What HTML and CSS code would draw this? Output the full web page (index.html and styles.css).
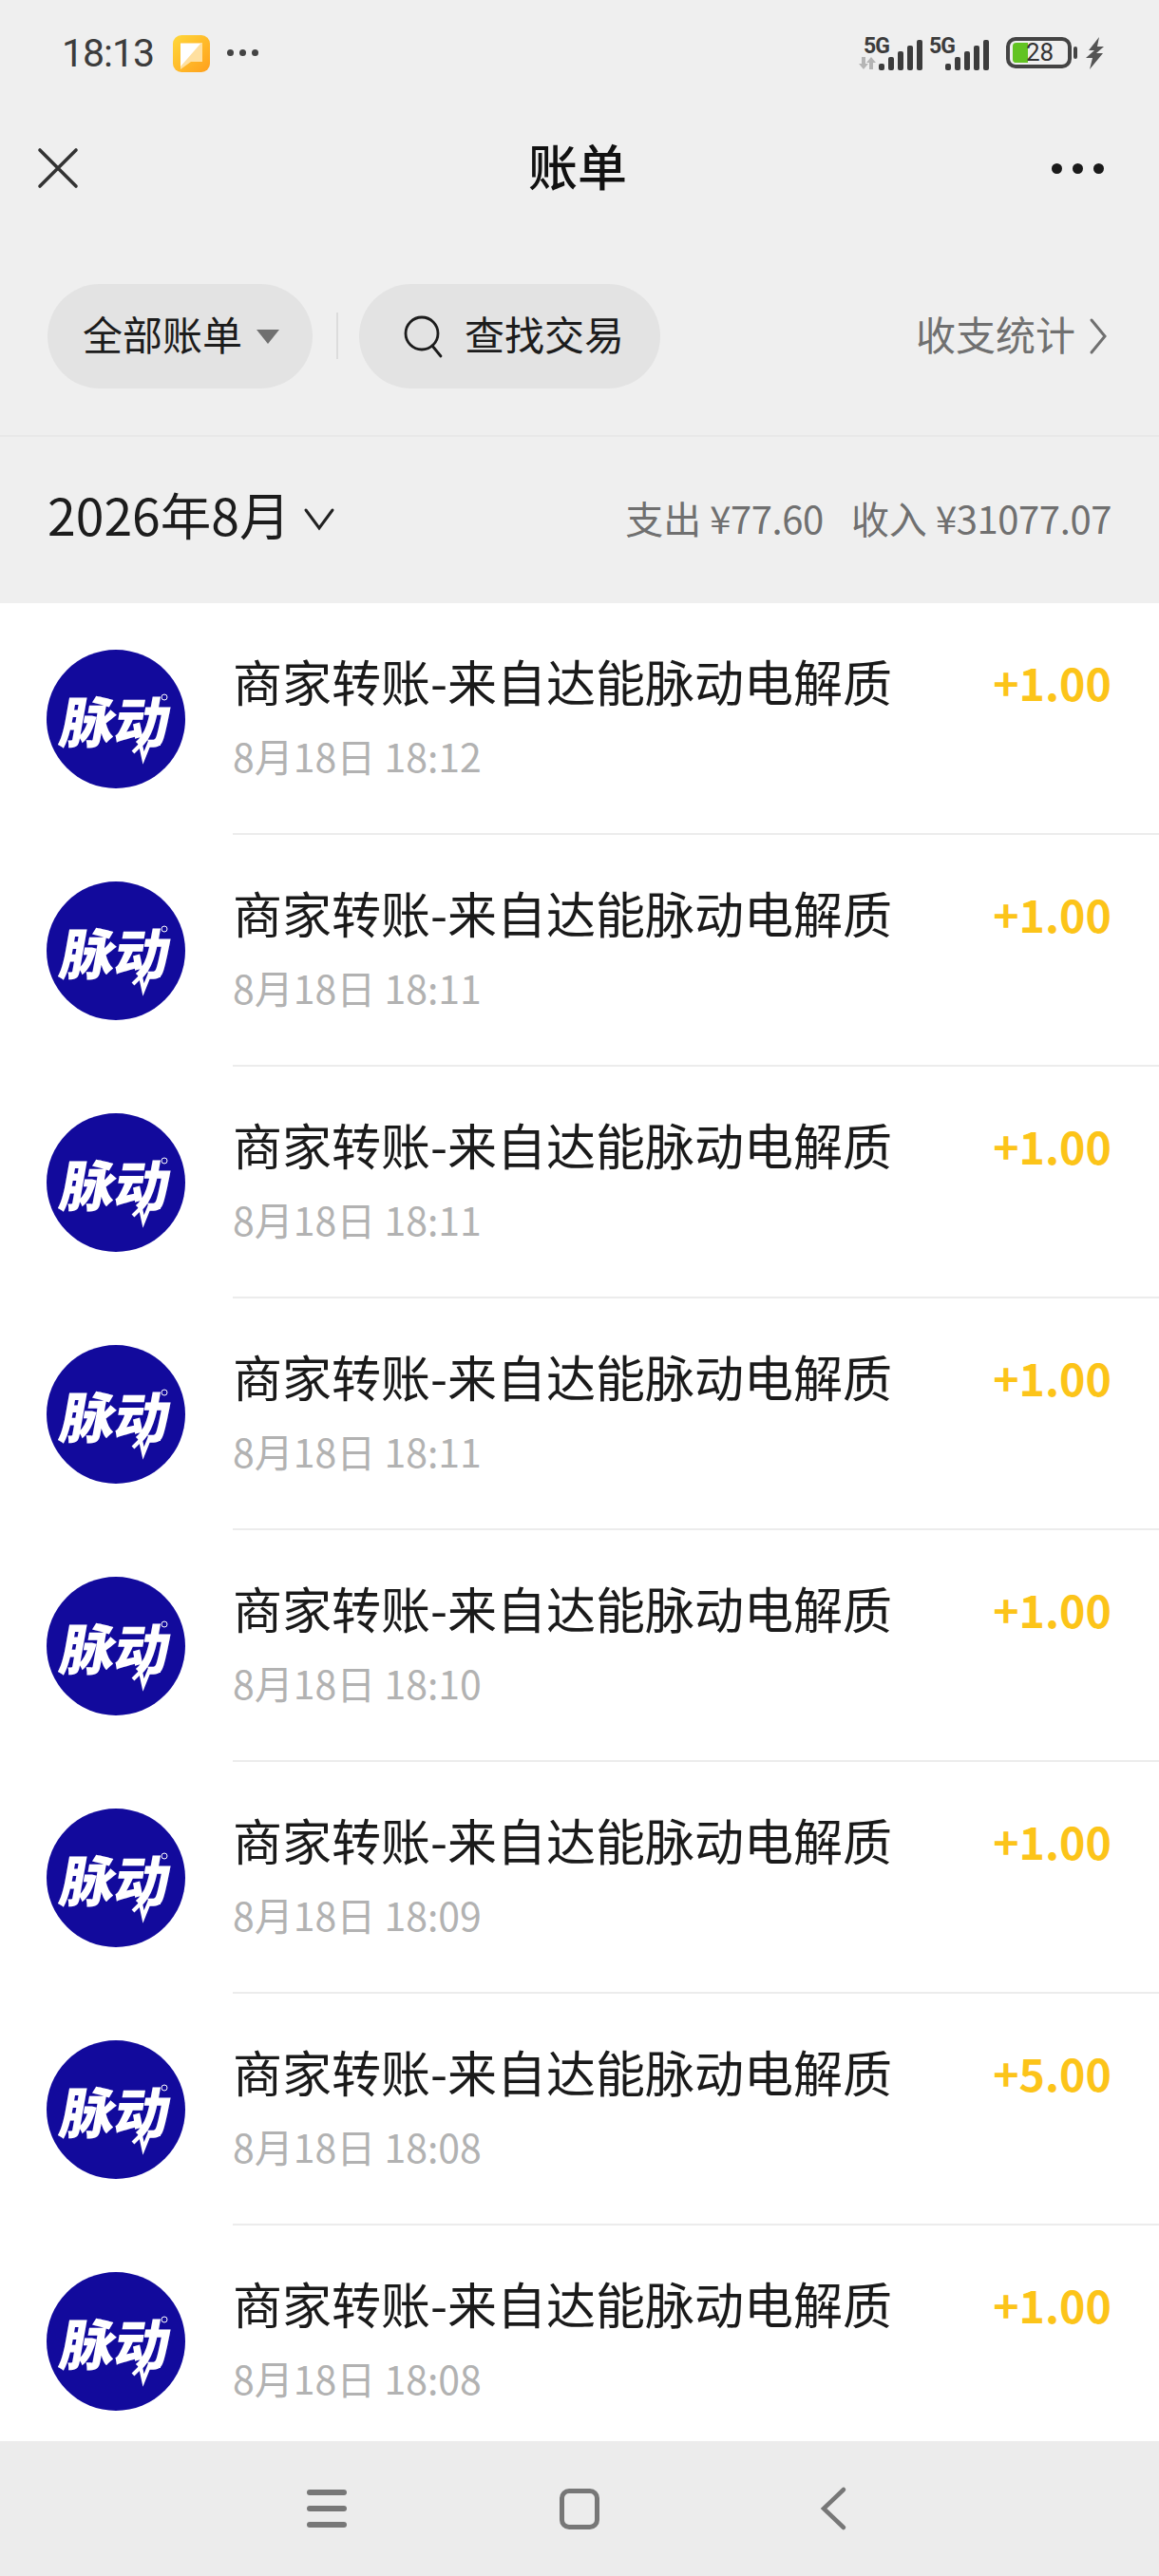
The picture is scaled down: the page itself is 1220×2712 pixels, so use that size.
FILE: index.html
```html
<!DOCTYPE html>
<html lang="zh-CN">
<head>
    <meta charset="UTF-8">
    <title>账单</title>
    <link rel="stylesheet" href="styles.css">
</head>
<body>
<div class="phone">
    <div class="status">
        <span class="time">18:13</span>
        <svg class="app-icon" viewBox="0 0 39 39">
            <defs>
                <linearGradient id="appGrad" x1="0" y1="0" x2="1" y2="1">
                    <stop offset="0" stop-color="#ffd83a"/>
                    <stop offset="1" stop-color="#ff9f1c"/>
                </linearGradient>
            </defs>
            <rect width="39" height="39" rx="9" fill="url(#appGrad)"/>
            <path d="M8 8h23v20H19L8 36z" fill="#ffe0a0"/>
            <path d="M8 9h21L8 33z" fill="#fff"/>
        </svg>
        <span class="status-dots"><i></i><i></i><i></i></span>
        <span class="grow"></span>
        <svg class="signal" viewBox="0 0 72 36">
            <text x="5" y="16" class="sig-text">5G</text>
            <path d="M7 20v7h3l-5 6-5-6h3v-7zM11 33v-7H8l5-6 5 6h-3v7z" fill="#b5b5b5"/>
            <rect x="21" y="27" width="6" height="7" rx="2"/>
            <rect x="31" y="20" width="6" height="14" rx="2"/>
            <rect x="41" y="14" width="6" height="20" rx="2"/>
            <rect x="51" y="8" width="6" height="26" rx="2"/>
            <rect x="61" y="2" width="6" height="32" rx="2"/>
        </svg>
        <svg class="signal signal-b" viewBox="0 0 66 36">
            <text x="0" y="16" class="sig-text">5G</text>
            <rect x="17" y="27" width="6" height="7" rx="2"/>
            <rect x="27" y="20" width="6" height="14" rx="2"/>
            <rect x="37" y="14" width="6" height="20" rx="2"/>
            <rect x="47" y="8" width="6" height="26" rx="2"/>
            <rect x="57" y="2" width="6" height="32" rx="2"/>
        </svg>
        <span class="battery"><span class="battery-fill"></span><span class="battery-num">28</span></span>
        <span class="battery-nub"></span>
        <svg class="bolt" viewBox="0 0 19 34"><path d="M14 0L3 14h6L0 22h7l-3 12L18 17h-7l8-7h-7z" fill="#555"/></svg>
    </div>

    <div class="header">
        <svg class="close" viewBox="0 0 42 42"><path d="M2 2l38 38M40 2L2 40" stroke="#333" stroke-width="3.6" stroke-linecap="round"/></svg>
        <div class="title">账单</div>
        <span class="more"><i></i><i></i><i></i></span>
    </div>

    <div class="filters">
        <div class="pill pill-all"><span class="label">全部账单</span><span class="tri"></span></div>
        <span class="divider"></span>
        <div class="pill pill-search">
            <svg class="search" viewBox="0 0 42 44"><circle cx="19" cy="19" r="17" fill="none" stroke="#1c1c1c" stroke-width="2.8"/><path d="M30 32l9 11" stroke="#1c1c1c" stroke-width="2.8" stroke-linecap="round"/></svg>
            <span class="label">查找交易</span>
        </div>
        <span class="grow"></span>
        <div class="stats"><span class="label">收支统计</span>
            <svg class="stats-arrow" viewBox="0 0 18 38"><path d="M2 2l14 17L2 36" fill="none" stroke="#707070" stroke-width="3" stroke-linecap="round"/></svg>
        </div>
    </div>

    <div class="month-bar">
        <div class="month">2026年8月</div>
        <svg class="month-arrow" viewBox="0 0 32 25"><path d="M2 3l14 19L30 3" fill="none" stroke="#222" stroke-width="3" stroke-linecap="round"/></svg>
        <span class="grow"></span>
        <div class="sum"><span>支出</span><span class="sum-val">¥77.60</span><span class="sum-gap">收入</span><span class="sum-val">¥31077.07</span></div>
    </div>

    <div class="list">
        <div class="row">
            <div class="logo"><span>脉动</span><svg class="logo-mark" viewBox="0 0 146 146"><path d="M91 108l8-8 3 14 6-15h12" fill="none" stroke="#fff" stroke-width="4"/><circle cx="124" cy="50" r="3" fill="none" stroke="#fff" stroke-width="1"/></svg></div>
            <div class="info">
                <div class="texts"><div class="name">商家转账-来自达能脉动电解质</div><div class="date">8月18日 18:12</div></div>
                <div class="amount">+1.00</div>
            </div>
        </div>
        <div class="row">
            <div class="logo"><span>脉动</span><svg class="logo-mark" viewBox="0 0 146 146"><path d="M91 108l8-8 3 14 6-15h12" fill="none" stroke="#fff" stroke-width="4"/><circle cx="124" cy="50" r="3" fill="none" stroke="#fff" stroke-width="1"/></svg></div>
            <div class="info">
                <div class="texts"><div class="name">商家转账-来自达能脉动电解质</div><div class="date">8月18日 18:11</div></div>
                <div class="amount">+1.00</div>
            </div>
        </div>
        <div class="row">
            <div class="logo"><span>脉动</span><svg class="logo-mark" viewBox="0 0 146 146"><path d="M91 108l8-8 3 14 6-15h12" fill="none" stroke="#fff" stroke-width="4"/><circle cx="124" cy="50" r="3" fill="none" stroke="#fff" stroke-width="1"/></svg></div>
            <div class="info">
                <div class="texts"><div class="name">商家转账-来自达能脉动电解质</div><div class="date">8月18日 18:11</div></div>
                <div class="amount">+1.00</div>
            </div>
        </div>
        <div class="row">
            <div class="logo"><span>脉动</span><svg class="logo-mark" viewBox="0 0 146 146"><path d="M91 108l8-8 3 14 6-15h12" fill="none" stroke="#fff" stroke-width="4"/><circle cx="124" cy="50" r="3" fill="none" stroke="#fff" stroke-width="1"/></svg></div>
            <div class="info">
                <div class="texts"><div class="name">商家转账-来自达能脉动电解质</div><div class="date">8月18日 18:11</div></div>
                <div class="amount">+1.00</div>
            </div>
        </div>
        <div class="row">
            <div class="logo"><span>脉动</span><svg class="logo-mark" viewBox="0 0 146 146"><path d="M91 108l8-8 3 14 6-15h12" fill="none" stroke="#fff" stroke-width="4"/><circle cx="124" cy="50" r="3" fill="none" stroke="#fff" stroke-width="1"/></svg></div>
            <div class="info">
                <div class="texts"><div class="name">商家转账-来自达能脉动电解质</div><div class="date">8月18日 18:10</div></div>
                <div class="amount">+1.00</div>
            </div>
        </div>
        <div class="row">
            <div class="logo"><span>脉动</span><svg class="logo-mark" viewBox="0 0 146 146"><path d="M91 108l8-8 3 14 6-15h12" fill="none" stroke="#fff" stroke-width="4"/><circle cx="124" cy="50" r="3" fill="none" stroke="#fff" stroke-width="1"/></svg></div>
            <div class="info">
                <div class="texts"><div class="name">商家转账-来自达能脉动电解质</div><div class="date">8月18日 18:09</div></div>
                <div class="amount">+1.00</div>
            </div>
        </div>
        <div class="row">
            <div class="logo"><span>脉动</span><svg class="logo-mark" viewBox="0 0 146 146"><path d="M91 108l8-8 3 14 6-15h12" fill="none" stroke="#fff" stroke-width="4"/><circle cx="124" cy="50" r="3" fill="none" stroke="#fff" stroke-width="1"/></svg></div>
            <div class="info">
                <div class="texts"><div class="name">商家转账-来自达能脉动电解质</div><div class="date">8月18日 18:08</div></div>
                <div class="amount">+5.00</div>
            </div>
        </div>
        <div class="row">
            <div class="logo"><span>脉动</span><svg class="logo-mark" viewBox="0 0 146 146"><path d="M91 108l8-8 3 14 6-15h12" fill="none" stroke="#fff" stroke-width="4"/><circle cx="124" cy="50" r="3" fill="none" stroke="#fff" stroke-width="1"/></svg></div>
            <div class="info">
                <div class="texts"><div class="name">商家转账-来自达能脉动电解质</div><div class="date">8月18日 18:08</div></div>
                <div class="amount">+1.00</div>
            </div>
        </div>
    </div>

    <div class="nav">
        <span class="nav-menu"><i></i><i></i><i></i></span>
        <span class="nav-home"></span>
        <svg class="nav-back" viewBox="0 0 26 44"><path d="M24 2L3 22l21 20" fill="none" stroke="#777" stroke-width="4.5" stroke-linecap="round"/></svg>
    </div>
</div>
</body>
</html>
```

FILE: styles.css
```css
*{
    box-sizing: border-box;
}
body{
    margin: 0;
    font-family: "Noto Sans CJK SC", "Noto Sans", sans-serif;
    background: #efefef;
}
i{
    display: block;
}
svg{
    display: block;
    flex: none;
    overflow: visible;
}
.phone{
    width: 1220px;
    height: 2712px;
    display: flex;
    flex-direction: column;
    overflow: hidden;
}
.grow{
    flex: 1;
}

/* status bar */
.status{
    height: 110px;
    padding: 37px 58px 0 65px;
    display: flex;
    align-items: flex-start;
}
.time{
    font-family: Roboto, sans-serif;
    font-size: 41px;
    line-height: 38px;
    color: #3c3c3c;
    width: 117px;
    letter-spacing: -1px;
}
.app-icon{
    width: 39px;
    height: 39px;
}
.status-dots{
    display: flex;
    gap: 6px;
    margin: 15px 0 0 18px;
}
.status-dots i{
    width: 7px;
    height: 7px;
    border-radius: 50%;
    background: #444;
}
.signal{
    width: 72px;
    height: 36px;
    fill: #3c3c3c;
    margin-top: 3px;
}
.signal-b{
    width: 66px;
    margin-left: 2px;
}
.sig-text{
    font-family: Roboto, sans-serif;
    font-size: 23px;
    font-weight: 700;
    letter-spacing: -1px;
}
.battery{
    display: block;
    position: relative;
    width: 69px;
    height: 33px;
    margin: 2px 0 0 15px;
    border: 4px solid #444;
    border-radius: 10px;
}
.battery-fill{
    display: block;
    width: 16px;
    height: 100%;
    margin-left: 3px;
    background: #62c322;
    border-radius: 4px 0 0 4px;
    transform: scaleY(0.84);
}
.battery-num{
    position: absolute;
    left: 17px;
    top: 0;
    font-family: Roboto, sans-serif;
    font-size: 26px;
    line-height: 25px;
    color: #333;
}
.battery-nub{
    width: 4px;
    height: 13px;
    margin: 12px 0 0 2px;
    background: #444;
    border-radius: 2px;
}
.bolt{
    width: 19px;
    height: 34px;
    margin: 2px 0 0 9px;
}

/* title bar */
.header{
    height: 134px;
    display: grid;
    grid-template-columns: 1fr auto 1fr;
    align-items: center;
    padding: 0 58px 0 40px;
}
.close{
    width: 42px;
    height: 42px;
}
.title{
    font-size: 52px;
    font-weight: 500;
    line-height: 60px;
    color: #111;
    margin-bottom: 6px;
    margin-left: 14px;
}
.more{
    display: flex;
    gap: 11px;
    justify-content: flex-end;
}
.more i{
    width: 11px;
    height: 11px;
    border-radius: 50%;
    background: #1a1a1a;
}

/* filter row */
.filters{
    height: 216px;
    padding: 55px 55px 0 50px;
    display: flex;
    align-items: flex-start;
    border-bottom: 2px solid #e8e8e8;
}
.label{
    margin-bottom: 7px;
}
.pill{
    height: 110px;
    border-radius: 55px;
    background: #e3e3e3;
    display: flex;
    align-items: center;
    font-size: 42px;
    color: #1c1c1c;
}
.pill-all{
    width: 279px;
    padding-left: 37px;
}
.tri{
    width: 0;
    height: 0;
    margin-left: 15px;
    border-left: 12px solid transparent;
    border-right: 12px solid transparent;
    border-top: 15px solid #707070;
}
.divider{
    width: 2px;
    height: 49px;
    margin: 30px 22px 0 25px;
    background: #dcdcdc;
}
.pill-search{
    width: 317px;
    padding-left: 47px;
}
.search{
    width: 42px;
    height: 44px;
    margin-right: 22px;
}
.stats{
    height: 110px;
    display: flex;
    align-items: center;
    font-size: 42px;
    color: #707070;
}
.stats-arrow{
    width: 18px;
    height: 38px;
    margin-left: 15px;
}

/* month row */
.month-bar{
    height: 175px;
    padding: 0 50px 0 50px;
    display: flex;
    align-items: center;
}
.month{
    font-size: 53.5px;
    color: #1c1c1c;
    line-height: 60px;
    margin-bottom: 13px;
}
.month-arrow{
    width: 32px;
    height: 25px;
    margin-left: 15px;
    margin-bottom: 3px;
}
.sum{
    display: flex;
    align-items: center;
    font-size: 40px;
    color: #707070;
    margin-bottom: 6px;
}
.sum-val{
    margin-left: 9px;
    letter-spacing: -0.4px;
}
.sum-gap{
    margin-left: 29px;
}

/* list */
.list{
    flex: 1;
    min-height: 0;
    overflow: hidden;
    background: #fff;
}
.row{
    height: 244px;
    padding-left: 49px;
    display: flex;
    align-items: center;
}
.logo{
    position: relative;
    width: 146px;
    height: 146px;
    flex: none;
    border-radius: 50%;
    background: #120a9c;
    display: flex;
    align-items: center;
    justify-content: center;
}
.logo span{
    font-size: 58px;
    font-weight: 900;
    line-height: 60px;
    letter-spacing: -1px;
    color: #fff;
    transform: skewX(-10deg);
}
.logo-mark{
    position: absolute;
    left: 0;
    top: 0;
    width: 146px;
    height: 146px;
}
.info{
    flex: 1;
    height: 100%;
    margin-left: 50px;
    padding: 47px 50px 0 0;
    display: flex;
    justify-content: space-between;
    align-items: flex-start;
    border-bottom: 2px solid #ececec;
}
.name{
    font-size: 52px;
    line-height: 70px;
    color: #1a1a1a;
}
.date{
    margin-top: 13px;
    font-size: 41px;
    line-height: 60px;
    color: #b2b2b2;
}
.amount{
    font-size: 46.5px;
    font-weight: 700;
    line-height: 72px;
    color: #fcc419;
}

/* system nav */
.nav{
    height: 142px;
    flex: none;
    background: #ececec;
    display: flex;
    align-items: center;
    padding-left: 323px;
}
.nav-menu{
    display: flex;
    flex-direction: column;
    gap: 11px;
    width: 42px;
}
.nav-menu i{
    height: 6px;
    border-radius: 3px;
    background: #777;
}
.nav-home{
    width: 42px;
    height: 43px;
    margin-left: 224px;
    border: 5px solid #777;
    border-radius: 10px;
}
.nav-back{
    width: 26px;
    height: 44px;
    margin-left: 233px;
}
```
